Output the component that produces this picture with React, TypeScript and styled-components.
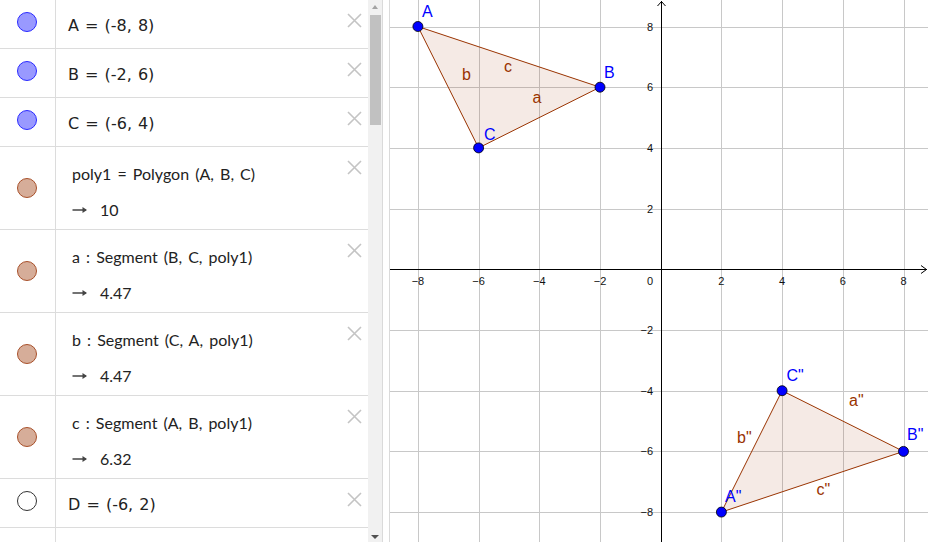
import React from "react";
import styled, { createGlobalStyle, css } from "styled-components";

const GlobalStyle = createGlobalStyle`
  html, body { margin: 0; padding: 0; background: #ffffff; overflow: hidden; }
  body { font-family: "DejaVu Sans", sans-serif; }
`;

const Layout = styled.div`
  display: flex;
  width: 928px;
  height: 542px;
  overflow: hidden;
  background: #fff;
`;

const AlgebraPanel = styled.div`
  display: flex;
  width: 383px;
  height: 542px;
  flex: none;
`;

const List = styled.div`
  width: 368px;
  height: 542px;
  overflow: hidden;
  display: flex;
  flex-direction: column;
`;

const Row = styled.div<{ $tall?: boolean }>`
  display: grid;
  grid-template-columns: 56px 1fr 36px;
  height: ${(p) => (p.$tall ? 82 : 48)}px;
  flex: none;
  border-bottom: 1px solid #dcdcdc;
`;

const MarbleCell = styled.div<{ $tall?: boolean }>`
  display: flex;
  align-items: center;
  justify-content: center;
  border-right: 1px solid #dcdcdc;
  padding-bottom: ${(p) => (p.$tall ? 0 : 4)}px;
  padding-right: 1px;
`;

type MarbleKind = "point" | "poly" | "hollow";

const Marble = styled.div<{ $kind: MarbleKind }>`
  width: 18px;
  height: 18px;
  border-radius: 50%;
  ${(p) =>
    p.$kind === "point"
      ? css`
          background: #9999ff;
          border: 1px solid #2a2aff;
        `
      : p.$kind === "poly"
      ? css`
          background: #d6ad99;
          border: 1px solid #a8502a;
        `
      : css`
          background: #ffffff;
          border: 1px solid #333333;
        `}
`;

const Content = styled.div<{ $tall?: boolean }>`
  display: flex;
  flex-direction: column;
  justify-content: ${(p) => (p.$tall ? "flex-start" : "center")};
  padding-left: ${(p) => (p.$tall ? 16 : 12)}px;
  padding-top: ${(p) => (p.$tall ? 17 : 4)}px;
  gap: 16px;
  color: #222;
`;

const PlainText = styled.div`
  font-family: "DejaVu Sans", sans-serif;
  font-size: 16px;
  line-height: 20px;
  white-space: nowrap;
  word-spacing: 1px;
`;

const MathText = styled.div`
  font-family: Lato, "DejaVu Sans", sans-serif;
  font-size: 16px;
  line-height: 20px;
  white-space: nowrap;
  word-spacing: 2px;
`;

const ValueLine = styled.div`
  display: flex;
  align-items: center;
  gap: 12px;
  font-family: Lato, "DejaVu Sans", sans-serif;
  font-size: 16px;
  line-height: 20px;
`;

const ArrowIcon = () => (
  <svg width="16" height="8" viewBox="0 0 16 8">
    <path d="M0.5 4 H14" stroke="#444" strokeWidth="1.5" fill="none" />
    <path d="M10.5 1 L15 4 L10.5 7 Z" fill="#444" />
  </svg>
);

const CloseCell = styled.div`
  padding-left: 15px;
  padding-top: 13px;
`;

const CloseIcon = () => (
  <svg width="15" height="15" viewBox="0 0 15 15">
    <path d="M1 1 L14 14 M14 1 L1 14" stroke="#c4c4c4" strokeWidth="1.6" fill="none" />
  </svg>
);

const ScrollTrack = styled.div`
  width: 15px;
  height: 542px;
  background: #f1f1f1;
  display: flex;
  flex-direction: column;
  align-items: center;
  border-right: 1px solid #dadada;
  box-sizing: border-box;
`;

const ArrowBox = styled.div`
  height: 15px;
  width: 15px;
  display: flex;
  align-items: center;
  justify-content: center;
  flex: none;
`;

const TriUp = styled.div`
  width: 0;
  height: 0;
  border-left: 3.5px solid transparent;
  border-right: 3.5px solid transparent;
  border-bottom: 4px solid #a3a3a3;
  margin-bottom: 2px;
`;

const TriDown = styled.div`
  width: 0;
  height: 0;
  border-left: 4px solid transparent;
  border-right: 4px solid transparent;
  border-top: 4px solid #505050;
  margin-top: 4px;
`;

const Thumb = styled.div`
  width: 11px;
  height: 110px;
  background: #c1c1c1;
  flex: none;
`;

const Spacer = styled.div`
  flex: 1;
`;

const Splitter = styled.div`
  width: 7px;
  flex: none;
  background: #fff;
  border-right: 1px solid #dadada;
  box-sizing: border-box;
`;

const Graphics = styled.div`
  flex: 1;
  height: 542px;
  overflow: hidden;
`;

type Item =
  | { kind: MarbleKind; text: string }
  | { kind: MarbleKind; def: string; value: string };

const items: Item[] = [
  { kind: "point", text: "A = (-8, 8)" },
  { kind: "point", text: "B = (-2, 6)" },
  { kind: "point", text: "C = (-6, 4)" },
  { kind: "poly", def: "poly1 = Polygon (A, B, C)", value: "10" },
  { kind: "poly", def: "a : Segment (B, C, poly1)", value: "4.47" },
  { kind: "poly", def: "b : Segment (C, A, poly1)", value: "4.47" },
  { kind: "poly", def: "c : Segment (A, B, poly1)", value: "6.32" },
  { kind: "hollow", text: "D = (-6, 2)" },
];

const S = 30.35;
const OX = 270.7;
const OY = 269.3;
const gx = (x: number) => OX + x * S;
const gy = (y: number) => OY - y * S;
const snap = (v: number) => Math.round(v) + 0.5;

const ticks = [-8, -6, -4, -2, 2, 4, 6, 8];
const label = (k: number) => (k < 0 ? `\u2212${-k}` : `${k}`);

const Plane = () => {
  const tri1 = [
    [-8, 8],
    [-2, 6],
    [-6, 4],
  ];
  const tri2 = [
    [2, -8],
    [8, -6],
    [4, -4],
  ];
  const pts = (t: number[][]) => t.map(([x, y]) => `${gx(x)},${gy(y)}`).join(" ");
  const brown = "#993300";
  const blue = "#0000ff";
  const font = "'Liberation Sans', Arial, sans-serif";
  return (
    <svg width="538" height="542" viewBox="0 0 538 542">
      {ticks.map((k) => (
        <line key={`v${k}`} x1={snap(gx(k))} x2={snap(gx(k))} y1={0} y2={542} stroke="#c8c8c8" strokeWidth="1" />
      ))}
      {ticks.map((k) => (
        <line key={`h${k}`} y1={snap(gy(k))} y2={snap(gy(k))} x1={0} x2={538} stroke="#c8c8c8" strokeWidth="1" />
      ))}
      <line x1={0} x2={537} y1={snap(OY)} y2={snap(OY)} stroke="#000" strokeWidth="1" />
      <polyline points={`531,${snap(OY) - 4} 536.5,${snap(OY)} 531,${snap(OY) + 4}`} fill="none" stroke="#000" strokeWidth="1" />
      <line x1={snap(OX)} x2={snap(OX)} y1={1} y2={542} stroke="#000" strokeWidth="1" />
      <polyline points={`${snap(OX) - 4},6 ${snap(OX)},1.5 ${snap(OX) + 4},6`} fill="none" stroke="#000" strokeWidth="1" />
      <g fontFamily={font} fontSize="11" fill="#111">
        {ticks.map((k) => (
          <text key={`xl${k}`} x={gx(k)} y={285} textAnchor="middle">
            {label(k)}
          </text>
        ))}
        {ticks.map((k) => (
          <text key={`yl${k}`} x={263} y={gy(k) + 4} textAnchor="end">
            {label(k)}
          </text>
        ))}
        <text x={263} y={285} textAnchor="end">0</text>
      </g>
      <polygon points={pts(tri1)} fill="rgba(153,51,0,0.1)" stroke={brown} strokeWidth="1" strokeLinejoin="round" />
      <polygon points={pts(tri2)} fill="rgba(153,51,0,0.1)" stroke={brown} strokeWidth="1" strokeLinejoin="round" />
      {[...tri1, ...tri2].map(([x, y]) => (
        <circle key={`p${x}${y}`} cx={gx(x)} cy={gy(y)} r="5" fill={blue} stroke="#000" strokeWidth="0.8" />
      ))}
      <g fontFamily={font} fontSize="16">
        <text x={32} y={17} fill={blue}>A</text>
        <text x={214} y={78} fill={blue}>B</text>
        <text x={94} y={139.5} fill={blue}>C</text>
        <text x={72} y={79.5} fill={brown}>b</text>
        <text x={114} y={72} fill={brown}>c</text>
        <text x={142.5} y={103} fill={brown}>a</text>
        <text x={396.5} y={381} fill={blue}>C"</text>
        <text x={459} y={406} fill={brown}>a"</text>
        <text x={517} y={440} fill={blue}>B"</text>
        <text x={347} y={443} fill={brown}>b"</text>
        <text x={335} y={502} fill={blue}>A"</text>
        <text x={426.5} y={495} fill={brown}>c"</text>
      </g>
    </svg>
  );
};

export default function App() {
  return (
    <>
      <GlobalStyle />
      <Layout>
        <AlgebraPanel>
          <List>
            {items.map((it, i) => {
              const tall = "def" in it;
              return (
                <Row key={i} $tall={tall}>
                  <MarbleCell $tall={tall}>
                    <Marble $kind={it.kind} />
                  </MarbleCell>
                  <Content $tall={tall}>
                    {"def" in it ? (
                      <>
                        <MathText>{it.def}</MathText>
                        <ValueLine>
                          <ArrowIcon />
                          <span>{it.value}</span>
                        </ValueLine>
                      </>
                    ) : (
                      <PlainText>{it.text}</PlainText>
                    )}
                  </Content>
                  <CloseCell>
                    <CloseIcon />
                  </CloseCell>
                </Row>
              );
            })}
            <Row>
              <MarbleCell />
              <Content />
              <div />
            </Row>
          </List>
          <ScrollTrack>
            <ArrowBox>
              <TriUp />
            </ArrowBox>
            <Thumb />
            <Spacer />
            <ArrowBox>
              <TriDown />
            </ArrowBox>
          </ScrollTrack>
        </AlgebraPanel>
        <Splitter />
        <Graphics>
          <Plane />
        </Graphics>
      </Layout>
    </>
  );
}
